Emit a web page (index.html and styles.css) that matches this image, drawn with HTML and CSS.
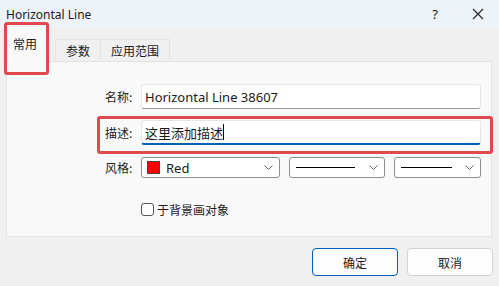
FILE: index.html
```html
<!DOCTYPE html>
<html lang="zh">
<head>
  <meta charset="UTF-8" />
  <title>Horizontal Line</title>
<link rel="stylesheet" href="styles.css">
</head>
<body>
  <div class="window">
    <div class="titlebar">
      <span class="title">Horizontal Line</span>
      <span class="help">?</span>
      <span class="close">
        <svg width="12" height="12" viewBox="0 0 12 12"><path d="M1 1L11 11M11 1L1 11" stroke="#222" stroke-width="1.1" fill="none"/></svg>
      </span>
    </div>

    <div class="tabs">
      <div class="tab active">常用<span class="mark mark-tab"></span></div>
      <div class="tab">参数</div>
      <div class="tab">应用范围</div>
    </div>

    <div class="panel">
      <div class="form">
        <label class="lbl">名称:</label>
        <div class="field">Horizontal Line 38607</div>

        <label class="lbl">描述:</label>
        <div class="field focus">这里添加描述<span class="caret"></span><span class="mark mark-desc"></span></div>

        <label class="lbl lbl-style">风格:</label>
        <div class="styles">
          <div class="select sel-color">
            <span class="swatch"></span><span class="sel-text">Red</span>
            <svg class="chev" width="9" height="5" viewBox="0 0 9 5"><path d="M0.5 0.5L4.5 4.5L8.5 0.5" stroke="#666" fill="none"/></svg>
          </div>
          <div class="select sel-line">
            <span class="line"></span>
            <svg class="chev" width="9" height="5" viewBox="0 0 9 5"><path d="M0.5 0.5L4.5 4.5L8.5 0.5" stroke="#666" fill="none"/></svg>
          </div>
          <div class="select sel-width">
            <span class="line"></span>
            <svg class="chev" width="9" height="5" viewBox="0 0 9 5"><path d="M0.5 0.5L4.5 4.5L8.5 0.5" stroke="#666" fill="none"/></svg>
          </div>
        </div>

        <span></span>
        <div class="check"><span class="box"></span>于背景画对象</div>
      </div>
    </div>

    <div class="footer">
      <button class="btn primary">确定</button>
      <button class="btn">取消</button>
    </div>
  </div>
</body>
</html>
```

FILE: styles.css
```css
* {
  box-sizing: border-box;
}

body {
  margin: 0;
  background-color: #f0f0f0;
  font-family: "Noto Sans", "Noto Sans CJK SC", sans-serif;
  font-size: 12px;
  color: #1a1a1a;
}

.window {
  width: 499px;
  height: 286px;
  overflow: hidden;
}

/* Title bar */
.titlebar {
  height: 28px;
  background-color: #eef2f9;
  display: flex;
  align-items: center;
  padding: 0 6px;
}

.title {
  flex: 1;
  font-size: 12px;
}

.help {
  font-size: 13px;
  margin-right: 34px;
}

.close {
  display: flex;
  margin-right: 9px;
}

/* Tabs */
.tabs {
  display: flex;
  align-items: flex-end;
  height: 33px;
  padding-left: 8px;
  font-family: "Noto Sans CJK SC", sans-serif;
  font-size: 12px;
}

.tab {
  height: 22px;
  padding: 0 10px;
  border: 1px solid #e3e3e3;
  border-bottom: none;
  background-color: #f0f0f0;
  display: flex;
  align-items: center;
  margin-left: -1px;
}

.tab.active {
  position: relative;
  height: 36px;
  width: 40px;
  padding: 0 5px;
  align-items: flex-start;
  padding-top: 8px;
  background-color: #f9f9f9;
  border-color: #f0f0f0;
  margin-right: 9px;
  z-index: 1;
  margin-bottom: -1px;
}

/* red annotation boxes */
.mark {
  position: absolute;
  border: 3px solid #e04a4e;
  border-radius: 3px;
}

.mark-tab {
  left: -4px;
  top: -5px;
  width: 45px;
  height: 53px;
}

.mark-desc {
  left: -45px;
  top: -5px;
  width: 396px;
  height: 38px;
}

/* Panel */
.panel {
  margin: 0 7px 0 6px;
  height: 176px;
  background-color: #f9f9f9;
  border: 1px solid #e3e3e3;
  padding: 22px 0 0 90px;
}

.form {
  display: grid;
  grid-template-columns: 44px 340px;
  row-gap: 11px;
  align-items: center;
  font-family: "Noto Sans CJK SC", sans-serif;
}

.lbl {
  text-align: left;
  padding-left: 8px;
  font-size: 12px;
  color: #222;
}

.field {
  position: relative;
  height: 25px;
  background-color: #fff;
  border: 1px solid #e6e6e6;
  border-bottom-color: #9a9a9a;
  border-radius: 3px;
  padding: 0 3px;
  display: flex;
  align-items: center;
  font-family: "Noto Sans", "Noto Sans CJK SC", sans-serif;
  font-size: 13px;
}

.field.focus {
  border-bottom: 2px solid #005fb8;
  font-family: "Noto Sans CJK SC", sans-serif;
}

.caret {
  display: inline-block;
  width: 1px;
  height: 16px;
  background-color: #000;
}

.lbl-style {
  margin-top: 1px;
}

.styles {
  display: flex;
  gap: 9px;
  margin-top: 1px;
}

.select {
  height: 21px;
  background-color: #fff;
  border: 1px solid #8d8d8d;
  border-radius: 3px;
  display: flex;
  align-items: center;
  padding: 0 6px 0 5px;
}

.sel-color {
  width: 140px;
}

.sel-line {
  width: 96px;
}

.sel-width {
  width: 88px;
}

.swatch {
  width: 13px;
  height: 13px;
  background-color: #f00;
  border: 1px solid #444;
  margin-right: 6px;
}

.sel-text {
  flex: 1;
  font-family: "Noto Sans", sans-serif;
  font-size: 13px;
}

.line {
  flex: 1;
  height: 1px;
  background-color: #000;
  margin: 0 14px 0 1px;
}

.sel-width .line {
  margin-right: 13px;
}

.check {
  grid-column: 2;
  margin-top: 12px;
  display: flex;
  align-items: center;
  font-size: 12px;
}

.box {
  width: 13px;
  height: 13px;
  border: 1px solid #555;
  border-radius: 3px;
  background-color: #fdfdfd;
  margin-right: 3px;
}

/* Footer buttons */
.footer {
  display: flex;
  justify-content: flex-end;
  gap: 9px;
  padding: 11px 6px 0 0;
}

.btn {
  width: 86px;
  height: 28px;
  background-color: #fdfdfd;
  border: 1px solid #d3d3d3;
  border-radius: 4px;
  font-family: "Noto Sans CJK SC", sans-serif;
  font-size: 12px;
  color: #1a1a1a;
}

.btn.primary {
  border-color: #005fb8;
}
```
